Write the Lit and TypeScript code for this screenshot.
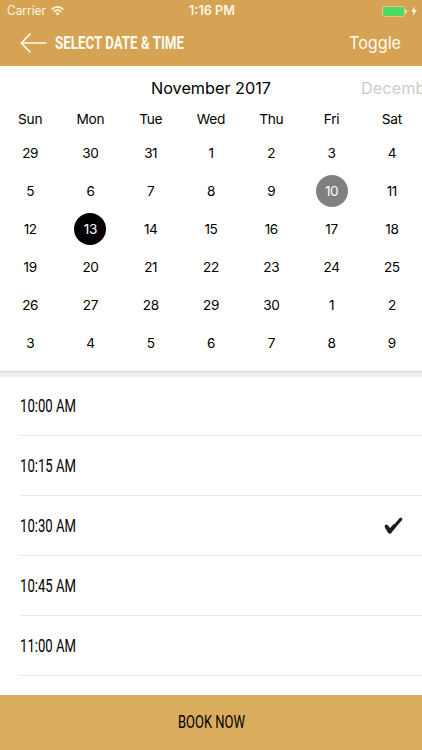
import { LitElement, html, css } from "lit";
import { customElement, property, state } from "lit/decorators.js";

/** A single line of text set to an exact width, for narrow display labels. */
@customElement("fit-label")
class FitLabel extends LitElement {
  @property() text = "";
  @property({ type: Number }) width = 60;
  @property({ type: Number }) baseline = 16;
  static styles = css`
    :host { display: block; flex: none; }
    svg { display: block; overflow: visible; height: 20px; }
    text { fill: currentColor; }
  `;
  render() {
    return html`<svg width=${this.width} height="20" role="img" aria-label=${this.text}>
      <text x="0" y=${this.baseline} textLength=${this.width} lengthAdjust="spacingAndGlyphs">${this.text}</text>
    </svg>`;
  }
}

@customElement("status-bar")
class StatusBar extends LitElement {
  static styles = css`
    :host { display: grid; grid-template-columns: 1fr auto 1fr; align-items: center; height: 22px;
      padding: 0 5px 0 7px; color: #fff5e2; font-size: 12.5px; }
    .left, .right { display: flex; align-items: center; gap: 5px; }
    .right { justify-content: flex-end; gap: 4px; }
    .time { font-weight: 600; }
    svg { display: block; }
  `;
  render() {
    return html`
      <div class="left">
        <fit-label text="Carrier" width="39" baseline="14.4"></fit-label>
        <svg width="13" height="10" viewBox="0 0 13 10" fill="none" stroke="#fff5e2" stroke-width="1.7">
          <path d="M.7 3.6C4-.1 9-.1 12.3 3.6M2.9 5.8c2.1-2.2 5.1-2.2 7.2 0" />
          <path d="M6.5 9.4 4.4 7.3q2.1-1.7 4.2 0z" fill="#fff5e2" stroke="none" />
        </svg>
      </div>
      <fit-label class="time" text="1:16 PM" width="46" baseline="14.4"></fit-label>
      <div class="right">
        <svg width="25" height="11" viewBox="0 0 25 11">
          <rect x=".5" y=".5" width="22" height="10" rx="1.8" fill="#4cd964" stroke="#eac68c" />
          <path d="M23.4 3.6q1.5.3 1.5 1.9t-1.5 1.9z" fill="#fff5e2" />
        </svg>
        <svg width="6" height="10" viewBox="0 0 6 10"><path d="M4 0 .2 5.6h2.3L1.7 10 5.8 4H3.4z" fill="#fff5e2" /></svg>
      </div>`;
  }
}

@customElement("month-calendar")
class MonthCalendar extends LitElement {
  @property({ type: Number }) selected = 15;
  @property({ type: Number }) today = 12;
  static styles = css`
    :host { display: block; height: 305px; overflow: hidden; background: #fff; }
    .months { display: grid; grid-template-columns: 1fr 120px 1fr; height: 44px; align-items: center; font-size: 16px; }
    .next { color: #cdcdcd; padding-left: 90px; overflow: hidden; }
    .grid { display: grid; grid-template-columns: repeat(7, 1fr); justify-items: center; align-items: center;
      font-size: 13.7px; line-height: 18px; letter-spacing: -0.25px; }
    .names { height: 16px; padding-bottom: 2px; }
    .days { grid-auto-rows: 38px; padding-top: 6px; }
    .day { display: flex; align-items: center; justify-content: center; width: 32px; height: 32px; border-radius: 50%;
      font-size: 13.6px; letter-spacing: -0.4px; }
    .today { background: #808080; color: #fff; }
    .selected { background: #000; color: #fff; }
  `;
  render() {
    const days = Array.from({ length: 42 }, (_, i) => new Date(2017, 9, 29 + i).getDate());
    return html`
      <div class="months">
        <span></span>
        <fit-label text="November 2017" width="120" baseline="15.5"></fit-label>
        <div class="next"><fit-label text="December 2017" width="121" baseline="15.5"></fit-label></div>
      </div>
      <div class="grid names">
        ${["Sun", "Mon", "Tue", "Wed", "Thu", "Fri", "Sat"].map((n) => html`<span>${n}</span>`)}
      </div>
      <div class="grid days">
        ${days.map((d, i) => html`<span class="day ${i === this.selected ? "selected" : i === this.today ? "today" : ""}">${d}</span>`)}
      </div>`;
  }
}

@customElement("app-root")
class AppRoot extends LitElement {
  @state() private chosen = "10:30 AM";
  static styles = css`
    :host { display: flex; flex-direction: column; height: 750px; overflow: hidden; background: #fff; color: #000;
      font-family: Inter, "Liberation Sans", sans-serif; }
    header { flex: none; height: 66px; background: #d5a353; }
    nav { display: flex; align-items: center; height: 41px; padding: 0 21px 0 20px; color: #fffaf0; }
    .back { display: block; margin-right: 8px; }
    .title { font: 700 18.7px Roboto, sans-serif; margin-right: auto; }
    .toggle { font-size: 17px; }
    .band { flex: none; height: 5px; background: #ededf4; border-top: 1px solid #d7d7df; }
    .times { flex: 1; min-height: 0; overflow: hidden; margin: -1px 0 0; padding: 0; list-style: none; }
    .slot { display: flex; align-items: center; justify-content: space-between; box-sizing: border-box; height: 60px;
      margin-left: 20px; padding-right: 19px; border-bottom: 1px solid #e8e8e8; }
    .slot fit-label, .book fit-label { font: 400 18.7px Roboto, sans-serif; }
    .slot fit-label { margin-left: -0.5px; }
    .book { flex: none; display: flex; align-items: center; justify-content: center; height: 55px; padding: 0; border: 0;
      background: #daad5e; color: #000; }
  `;
  render() {
    return html`
      <header>
        <status-bar></status-bar>
        <nav>
          <svg class="back" width="27" height="20" viewBox="0 0 27 20" fill="none" stroke="#fffaf0" stroke-width="1.7" stroke-linecap="round" stroke-linejoin="round">
            <path d="M10 1 1.3 10 10 19M1.3 10h24.5" />
          </svg>
          <fit-label class="title" text="SELECT DATE &amp; TIME" width="129" baseline="16.3"></fit-label>
          <fit-label class="toggle" text="Toggle" width="52" baseline="15.9"></fit-label>
        </nav>
      </header>
      <month-calendar></month-calendar>
      <div class="band"></div>
      <ul class="times">
        ${["10:00 AM", "10:15 AM", "10:30 AM", "10:45 AM", "11:00 AM"].map(
          (t) => html`<li class="slot" @click=${() => (this.chosen = t)}>
            <fit-label text=${t} width="56"></fit-label>
            ${t === this.chosen
              ? html`<svg width="19" height="18" viewBox="0 0 19 18" fill="none" stroke="#1c1c1e" stroke-linecap="round" stroke-linejoin="round">
                  <path d="M2.3 9.3 5.8 14.8 16.7 2.2" stroke-width="3.2" /><path d="M2.9 10 5.8 14.6 10 9.4" stroke-width="3.9" />
                </svg>`
              : ""}
          </li>`
        )}
      </ul>
      <button class="book"><fit-label text="BOOK NOW" width="67" baseline="15"></fit-label></button>`;
  }
}
